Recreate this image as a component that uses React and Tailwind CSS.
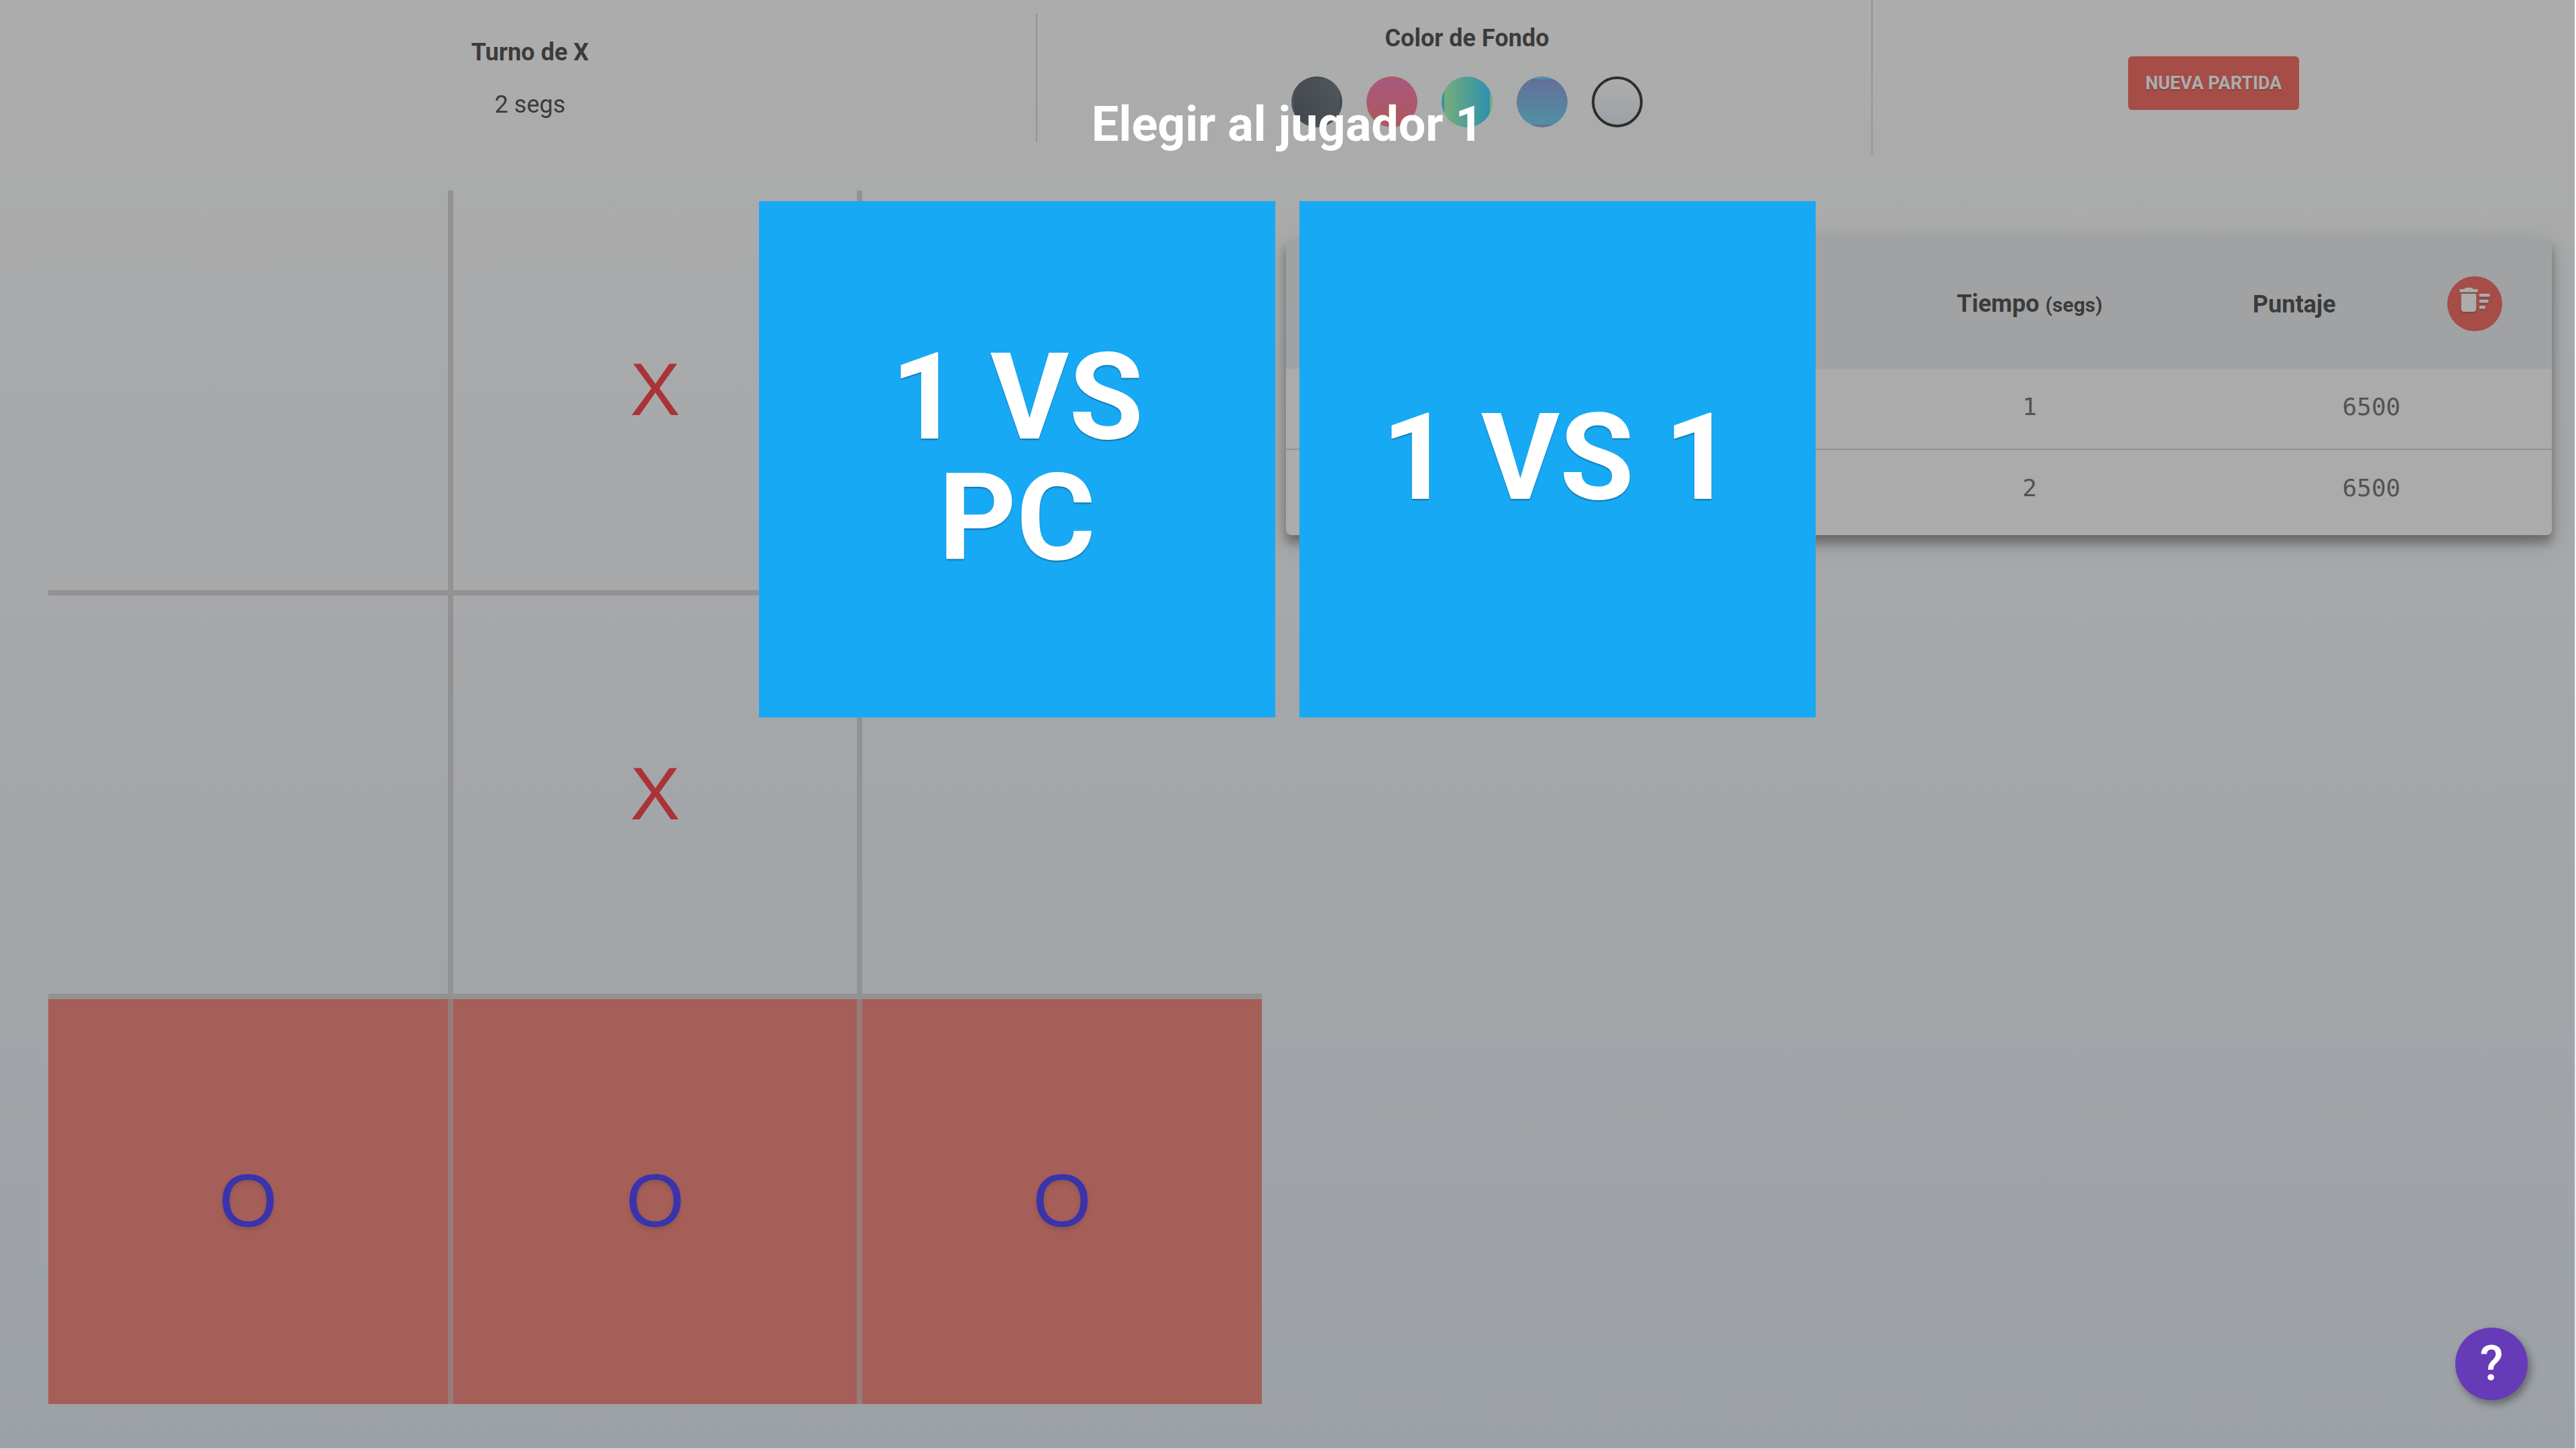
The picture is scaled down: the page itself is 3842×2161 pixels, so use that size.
import { MdDeleteSweep } from "react-icons/md";

const swatches = [
  { name: "Oscuro", fill: "border-transparent bg-[linear-gradient(60deg,#29323c,#485563)]" },
  { name: "Rosa", fill: "border-transparent bg-[linear-gradient(to_bottom,#f857a6,#ff5858)]" },
  { name: "Verde", fill: "border-transparent bg-[linear-gradient(to_right,#92fe9d,#00c9ff)]" },
  { name: "Azul", fill: "border-transparent bg-[linear-gradient(to_top,#48c6ef,#6f86d6)]" },
  { name: "Claro", fill: "border-black bg-[linear-gradient(to_top,#dfe9f3,white)]" },
];

const board = ["", "X", "", "", "X", "", "O", "O", "O"];

const scores = [
  { seconds: 1, points: 6500 },
  { seconds: 2, points: 6500 },
];

function Cell({ value, index }) {
  const won = index > 5;
  const inner = index % 3 < 2 ? "border-r-8" : "";
  const lower = index < 6 ? "border-b-8" : "";
  const tone = won ? "bg-[#f06456] border-[#d29e96]" : "border-[#cacacc]";
  const ink = value === "O" ? "text-[#1a0cff] [text-shadow:0_4px_6px_rgba(0,0,0,0.2)]" : "text-[#fa0c14]";
  return (
    <button
      type="button"
      aria-label={`Casilla ${index + 1}`}
      className={`flex items-center justify-center pb-[2px] font-['Liberation_Sans',sans-serif] text-[112px] leading-none ${inner} ${lower} ${tone} ${ink}`}
    >
      {value}
    </button>
  );
}

function Header() {
  return (
    <header className="grid h-[284px] grid-cols-[1547fr_1246fr_1049fr] items-start text-[36px] leading-[42px]">
      <div className="mt-5 flex h-48 flex-col items-center justify-center gap-9 border-r-2 border-[#cccccc] pt-[2px] pl-9">
        <h2 className="font-bold">Turno de X</h2>
        <p>2 segs</p>
      </div>
      <div className="flex h-[230px] flex-col items-center gap-9 border-r-2 border-[#cccccc] pt-9 pl-[38px]">
        <h2 className="font-bold">Color de Fondo</h2>
        <div className="flex gap-9">
          {swatches.map((s) => (
            <button key={s.name} type="button" aria-label={s.name} className={`size-[76px] rounded-full border-4 ${s.fill}`} />
          ))}
        </div>
      </div>
      <div className="flex justify-center pt-[84px] pr-8">
        <button type="button" className="h-20 rounded-md bg-[#f04133] px-[26px] text-[27px] font-bold text-white uppercase [text-shadow:0_2px_1px_rgba(0,0,0,0.3)]">
          Nueva partida
        </button>
      </div>
    </header>
  );
}

function Scores() {
  return (
    <section className="mt-[72px] self-start rounded-lg bg-[#fdfdfd] pb-2 shadow-[0_12px_14px_0_rgba(0,0,0,0.4),0_10px_40px_0_rgba(0,0,0,0.22)]">
      <table className="w-full table-fixed border-collapse text-center text-[36px] leading-[42px]">
        <colgroup>
          <col className="w-[46%]" />
          <col className="w-[25.5%]" />
          <col className="w-[16.3%]" />
          <col className="w-[12.2%]" />
        </colgroup>
        <thead>
          <tr className="h-[194px] bg-[#e9ebed]">
            <td className="rounded-tl-lg" />
            <th className="pt-[2px] font-bold">
              Tiempo <small className="text-[30px]">(segs)</small>
            </th>
            <th className="pt-[2px] font-bold">Puntaje</th>
            <td className="rounded-tr-lg">
              <button type="button" aria-label="Borrar puntajes" className="mx-auto flex size-[82px] items-center justify-center rounded-full bg-[#f04133] pb-3 text-white">
                <MdDeleteSweep className="size-[54px] drop-shadow-[0_2px_1px_rgba(0,0,0,0.3)]" />
              </button>
            </td>
          </tr>
        </thead>
        <tbody className="font-['DejaVu_Sans_Mono',monospace] text-[#4c4c4c]">
          {scores.map((s) => (
            <tr key={s.seconds} className="h-[120px] border-b-2 border-[#cccccc] last:border-b-0">
              <td />
              <td className="pb-[6px]">{s.seconds}</td>
              <td className="pb-[6px]" colSpan={2}>{s.points}</td>
            </tr>
          ))}
        </tbody>
      </table>
    </section>
  );
}

function PlayerDialog() {
  const choice =
    "size-[770px] bg-[#18a9f5] px-28 pb-1 text-[180px] leading-none font-bold text-white uppercase [text-shadow:0_2px_2px_rgba(0,0,0,0.3)]";
  return (
    <div role="dialog" aria-labelledby="dialog-title" className="absolute top-0 right-[2px] bottom-px left-0 flex flex-col items-center bg-[#5a5a5a]/50 pt-36">
      <h1 id="dialog-title" className="mb-[72px] text-[72px] leading-[84px] font-bold text-white">
        Elegir al jugador 1
      </h1>
      <div className="flex gap-9">
        <button type="button" className={choice}>1 vs PC</button>
        <button type="button" className={choice}>1 vs 1</button>
      </div>
    </div>
  );
}

export default function App() {
  return (
    <div className="relative min-h-screen bg-[linear-gradient(to_top,#dfe9f3,white)] font-[Roboto,sans-serif] text-[#1c1c1c]">
      <Header />
      <main className="grid grid-cols-[1810fr_1888fr] gap-9 pr-9 pl-[72px]">
        <div className="grid aspect-square grid-cols-[604fr_610fr_596fr] grid-rows-[604fr_602fr_604fr]">
          {board.map((value, i) => (
            <Cell key={i} value={value} index={i} />
          ))}
        </div>
        <Scores />
      </main>
      <PlayerDialog />
      <button
        type="button"
        aria-label="Ayuda"
        className="fixed right-[72px] bottom-[73px] size-[108px] rounded-full bg-[#673ab7] text-[72px] leading-none font-medium text-white shadow-[4px_6px_12px_rgba(0,0,0,0.35)]"
      >
        ?
      </button>
    </div>
  );
}
